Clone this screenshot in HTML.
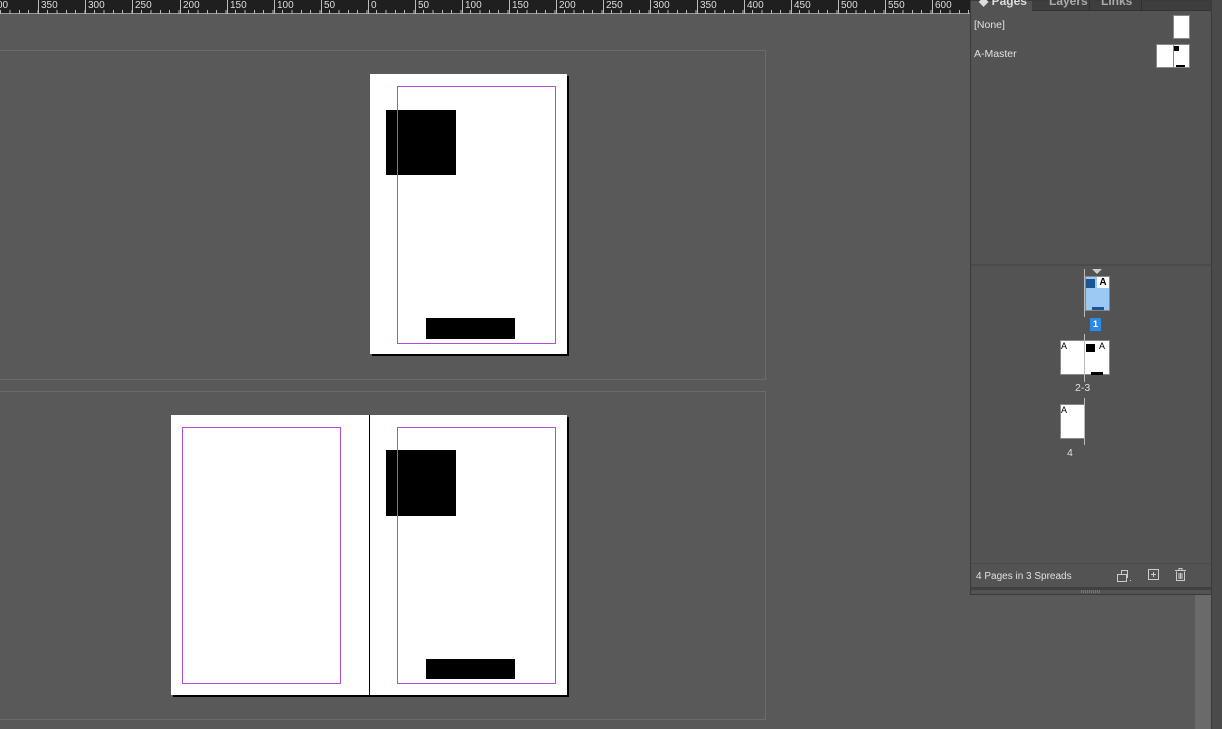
<!DOCTYPE html>
<html><head><style>
*{margin:0;padding:0;box-sizing:border-box}
body{width:1222px;height:729px;background:#595959;position:relative;overflow:hidden;font-family:"Liberation Sans",sans-serif}
.a{position:absolute}
.ruler{left:0;top:0;width:970px;height:14px;background:#1f1f1f;border-bottom:1px solid #999}
.ruler span{position:absolute;top:0;font-size:10px;color:#ddd;line-height:11px;padding-left:2px;border-left:1px solid #bbb;height:14px}
.spread{background:#595959;border:1px solid #6b6b6b}
.page{background:#fff;box-shadow:2px 2px 0 #000}
.mg{border:1px solid #b44dd6}
.blk{background:#000}
.pan{left:970px;top:0;width:242px;height:595px;background:#535353;border:1px solid #3a3a3a}
.t{color:#e0e0e0;font-size:10.5px}
.th{background:#fff;border:1px solid #888}
.tab{position:absolute;top:-7px;font-size:12px;color:#aaa;font-weight:bold}
</style></head><body>
<div class="a ruler">
<span style="left:-6px">00</span><span style="left:38px">350</span><span style="left:85px">300</span><span style="left:132px">250</span><span style="left:180px">200</span><span style="left:227px">150</span><span style="left:274px">100</span><span style="left:321px">50</span><span style="left:368px">0</span><span style="left:415px">50</span><span style="left:462px">100</span><span style="left:509px">150</span><span style="left:556px">200</span><span style="left:603px">250</span><span style="left:650px">300</span><span style="left:697px">350</span><span style="left:744px">400</span><span style="left:791px">450</span><span style="left:838px">500</span><span style="left:885px">550</span><span style="left:932px">600</span>
<div class="a" style="left:0;top:10px;width:970px;height:4px;background:repeating-linear-gradient(90deg,#bbb 0 1px,transparent 1px 9.4px)"></div>
</div>
<div class="a spread" style="left:-2px;top:50px;width:768px;height:330px"></div>
<div class="a spread" style="left:-2px;top:391px;width:768px;height:329px"></div>
<div class="a page" style="left:370px;top:74px;width:197px;height:280px"></div>
<div class="a mg" style="left:397px;top:86px;width:159px;height:258px"></div>
<div class="a blk" style="left:386px;top:110px;width:70px;height:65px"></div>
<div class="a" style="left:397px;top:86px;width:1px;height:258px;background:#b44dd6"></div>
<div class="a blk" style="left:426px;top:318px;width:89px;height:21px"></div>
<div class="a page" style="left:171px;top:415px;width:396px;height:280px"></div>
<div class="a" style="left:369px;top:415px;width:1px;height:280px;background:#000"></div>
<div class="a mg" style="left:182px;top:427px;width:159px;height:257px"></div>
<div class="a mg" style="left:397px;top:427px;width:159px;height:257px"></div>
<div class="a blk" style="left:386px;top:450px;width:70px;height:66px"></div>
<div class="a" style="left:397px;top:427px;width:1px;height:257px;background:#b44dd6"></div>
<div class="a blk" style="left:426px;top:659px;width:89px;height:20px"></div>
<div class="a" style="left:1195px;top:595px;width:16px;height:134px;background:#6a6a6a"></div>
<div class="a" style="left:1211px;top:0;width:11px;height:729px;background:#4a4a4a;border-left:1px solid #3a3a3a"></div>
<div class="a pan">
<div class="a" style="left:0;top:0;width:240px;height:10px;background:#3e3e3e;border-bottom:1px solid #333"></div>
<div class="a" style="left:0;top:0;width:61px;height:11px;background:#535353"></div>
<div class="a" style="left:118px;top:0;width:1px;height:10px;background:#2e2e2e"></div>
<div class="a" style="left:170px;top:0;width:1px;height:10px;background:#2e2e2e"></div>
<div class="tab" style="left:8px;color:#ddd">◆ Pages</div>
<div class="tab" style="left:78px">Layers</div>
<div class="tab" style="left:130px">Links</div>
<div class="a t" style="left:3px;top:18px">[None]</div>
<div class="a th" style="left:202px;top:14px;width:17px;height:24px"></div>
<div class="a t" style="left:3px;top:47px">A-Master</div>
<div class="a th" style="left:185px;top:43px;width:34px;height:24px"></div>
<div class="a" style="left:202px;top:43px;width:1px;height:24px;background:#888"></div>
<div class="a blk" style="left:203px;top:45px;width:5px;height:5px"></div>
<div class="a blk" style="left:205px;top:64px;width:9px;height:2px"></div>
<div class="a" style="left:0;top:263px;width:240px;height:2px;background:#4a4a4a"></div>
<div class="a" style="left:113px;top:268px;width:1px;height:48px;background:#bbb"></div>
<div class="a" style="left:121px;top:268px;width:0;height:0;border-left:5px solid transparent;border-right:5px solid transparent;border-top:5px solid #ccc"></div>
<div class="a" style="left:114px;top:275px;width:25px;height:35px;background:#9cc8f4;border:1px solid #888"></div>
<div class="a" style="left:115px;top:278px;width:9px;height:9px;background:#1d5590"></div>
<div class="a" style="left:126px;top:276px;width:12px;height:11px;background:#fff;font:bold 10px 'Liberation Sans';color:#000;text-align:center">A</div>
<div class="a" style="left:121px;top:306px;width:12px;height:3px;background:#1d5590"></div>
<div class="a" style="left:119px;top:317px;width:11px;height:13px;background:#2d8ae6;color:#fff;font:bold 9px 'Liberation Sans';text-align:center;line-height:13px">1</div>
<div class="a" style="left:89px;top:339px;width:50px;height:35px;background:#fff;border:1px solid #888"></div>
<div class="a" style="left:113px;top:333px;width:1px;height:48px;background:#bbb"></div>
<div class="a" style="left:90px;top:340px;font-size:9px;color:#000">A</div>
<div class="a" style="left:128px;top:340px;font-size:9px;color:#000">A</div>
<div class="a blk" style="left:115px;top:343px;width:9px;height:8px"></div>
<div class="a blk" style="left:120px;top:371px;width:12px;height:3px"></div>
<div class="a t" style="left:104px;top:381px">2-3</div>
<div class="a" style="left:89px;top:403px;width:25px;height:35px;background:#fff;border:1px solid #888"></div>
<div class="a" style="left:113px;top:397px;width:1px;height:47px;background:#bbb"></div>
<div class="a" style="left:90px;top:404px;font-size:9px;color:#000">A</div>
<div class="a t" style="left:96px;top:446px">4</div>
<div class="a" style="left:0;top:562px;width:240px;height:1px;background:#4a4a4a"></div>
<div class="a t" style="left:5px;top:570px;font-size:10px">4 Pages in 3 Spreads</div>
<svg class="a" style="left:145px;top:568px" width="20" height="14"><g fill="none" stroke="#ccc"><rect x="1.5" y="5.5" width="9" height="7"/><path d="M5.5 5.5V1.5h6v7h-1"/></g><rect x="14" y="11" width="1" height="1" fill="#ccc"/></svg>
<svg class="a" style="left:177px;top:568px" width="12" height="12"><rect x="0.5" y="0.5" width="10" height="10" fill="none" stroke="#ccc"/><path d="M5.5 3v5M3 5.5h5" stroke="#ccc"/></svg>
<svg class="a" style="left:204px;top:567px" width="12" height="14"><path d="M0 2.5h11M4 2.5V.5h3v2M1.5 3.5v9h8v-9M4 5v6M5.5 5v6M7 5v6" fill="none" stroke="#ccc"/></svg>
<div class="a" style="left:0;top:586px;width:240px;height:3px;background:#404040"></div>
<div class="a" style="left:110px;top:589px;width:20px;height:3px;background:repeating-linear-gradient(90deg,#777 0 1px,transparent 1px 2px)"></div>
</div>
</body></html>
